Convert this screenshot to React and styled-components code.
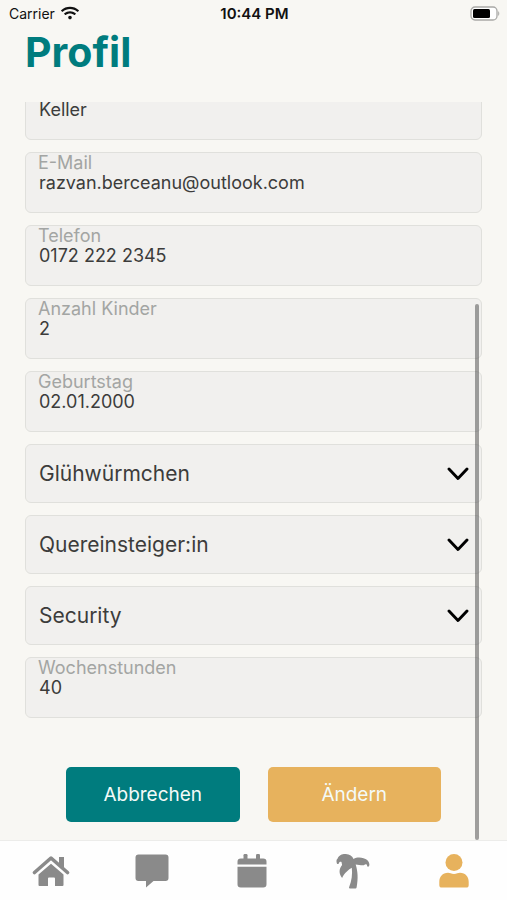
import React, { useLayoutEffect, useRef, useState } from 'react';
import styled, { createGlobalStyle } from 'styled-components';
import { FaUser, FaWifi } from 'react-icons/fa';

const colors = {
  background: '#f8f7f3',
  field: '#f1f0ee',
  border: '#e0e0dc',
  text: '#3c3c3b',
  label: '#a3a5a3',
  primary: '#007c7e',
  secondary: '#e7b25d',
  icon: '#8a8a8a',
};

const GlobalStyle = createGlobalStyle`
  * { box-sizing: border-box; }

  body {
    margin: 0;
    background: ${colors.background};
    color: ${colors.text};
    font-family: Inter, "Liberation Sans", sans-serif;
  }

  button, input, select { font-family: inherit; }
`;

const Screen = styled.div`
  display: flex;
  flex-direction: column;
  height: 100vh;
`;

const StatusBar = styled.div`
  display: grid;
  grid-template-columns: 1fr auto 1fr;
  align-items: center;
  height: 26px;
  padding: 0 7px 0 9px;
  color: #111;
  font-size: 14px;
`;

const Carrier = styled.span`
  display: flex;
  align-items: center;
  gap: 6px;
`;

const Time = styled.span`
  font-size: 15px;
  font-weight: 600;
`;

const BatterySlot = styled.span`
  display: flex;
  justify-content: flex-end;
`;

const Title = styled.h1`
  margin: 0;
  padding: 2px 25px 26px;
  color: ${colors.primary};
  font-size: 41px;
  font-weight: 700;
  line-height: 48px;
`;

const ScrollArea = styled.main`
  position: relative;
  flex: 1;
  min-height: 0;
`;

const Scroller = styled.div`
  height: 100%;
  overflow-y: auto;
  scrollbar-width: none;
`;

const Thumb = styled.div`
  position: absolute;
  right: 28px;
  width: 4px;
  border-radius: 2px;
  background: rgba(70, 70, 70, 0.5);
  pointer-events: none;
`;

const Form = styled.form`
  display: flex;
  flex-direction: column;
  gap: 12px;
  padding: 28px 25px 18px;
`;

const Avatar = styled.div`
  display: flex;
  align-items: center;
  justify-content: center;
  align-self: center;
  width: 160px;
  height: 160px;
  margin-bottom: 56px;
  border-radius: 50%;
  background: ${colors.field};
  color: ${colors.icon};
`;

const FieldBox = styled.div`
  display: flex;
  flex-direction: column;
  flex-shrink: 0;
  height: 61px;
  padding: 0 12px;
  border: 1px solid ${colors.border};
  border-radius: 6px;
  background: ${colors.field};
`;

const FieldLabel = styled.label`
  color: ${colors.label};
  font-size: 18px;
  line-height: 20px;
`;

const FieldInput = styled.input`
  width: 100%;
  height: 20px;
  padding: 0 1px;
  border: none;
  outline: none;
  background: transparent;
  color: ${colors.text};
  font-size: 18px;
  line-height: 20px;
`;

const SelectBox = styled.div`
  display: grid;
  align-items: center;
  flex-shrink: 0;
  height: 59px;
  border: 1px solid ${colors.border};
  border-radius: 6px;
  background: ${colors.field};

  > * { grid-area: 1 / 1; }

  > svg {
    justify-self: end;
    margin-right: 12px;
    pointer-events: none;
  }
`;

const Select = styled.select`
  appearance: none;
  width: 100%;
  height: 100%;
  padding: 0 40px 0 13px;
  border: none;
  outline: none;
  background: transparent;
  color: ${colors.text};
  font-size: 21px;
`;

const Actions = styled.div`
  display: flex;
  gap: 28px;
  padding: 37px 41px 0;
`;

const ActionButton = styled.button`
  flex: 1;
  height: 55px;
  border: none;
  border-radius: 5px;
  background: ${({ $secondary }) => ($secondary ? colors.secondary : colors.primary)};
  color: #f4faf8;
  font-size: 19px;
  cursor: pointer;
`;

const TabBar = styled.nav`
  display: flex;
  flex-shrink: 0;
  height: 60px;
  padding: 0 3px 0 1px;
  border-top: 1px solid #ececea;
  background: #fefefe;
`;

const Tab = styled.a`
  display: flex;
  flex: 1;
  align-items: center;
  justify-content: center;
  color: ${({ $active }) => ($active ? colors.secondary : colors.icon)};
`;

const Battery = () => (
  <svg width="30" height="15" viewBox="0 0 30 15" aria-hidden="true">
    <rect x="1" y="1" width="26" height="13" rx="4" fill="#fff" stroke="#a9a9a7" strokeWidth="1.3" />
    <rect x="3" y="3" width="17" height="9" rx="1.5" fill="#000" />
    <path d="M28.2 5.2c1.4.6 1.4 4 0 4.6z" fill="#a9a9a7" />
  </svg>
);

const Chevron = () => (
  <svg width="22" height="14" viewBox="0 0 22 14" fill="none" aria-hidden="true">
    <path d="M2 2l9 9.500 9-9.500" stroke="#000" strokeWidth="2.900" strokeLinecap="round" strokeLinejoin="round" />
  </svg>
);

const HouseIcon = () => (
  <svg width="38" height="32" viewBox="0 0 38 32" fill="currentColor" aria-hidden="true">
    <path d="M2.500 17.500L19 3l16.500 14.500" fill="none" stroke="currentColor" strokeWidth="3.600" strokeLinecap="round" strokeLinejoin="round" />
    <path d="M27 2h5v13l-5-4.500z" />
    <path d="M19 8.800L31.500 19.600V30a1 1 0 0 1-1 1H23v-7.500a1 1 0 0 0-1-1h-5a1 1 0 0 0-1 1V31H7.500a1 1 0 0 1-1-1V19.600z" />
  </svg>
);

const ChatIcon = () => (
  <svg width="34" height="34" viewBox="0 0 34 34" fill="currentColor" aria-hidden="true">
    <path d="M3.500.500h27a3 3 0 0 1 3 3v20.500a3 3 0 0 1-3 3H18.500l-7.500 6.500V27H3.500a3 3 0 0 1-3-3V3.500a3 3 0 0 1 3-3z" />
  </svg>
);

const CalendarIcon = () => (
  <svg width="30" height="34" viewBox="0 0 30 34" fill="currentColor" aria-hidden="true">
    <rect x="6.500" width="4" height="7" rx="1.200" />
    <rect x="19" width="4" height="7" rx="1.200" />
    <path d="M3.800 4.500h22.400A3.300 3.300 0 0 1 29.500 7.800V10.500H.500V7.800a3.300 3.300 0 0 1 3.300-3.300z" />
    <path d="M.500 12.700h29v17.500a3.300 3.300 0 0 1-3.300 3.300H3.800a3.300 3.300 0 0 1-3.300-3.300z" />
  </svg>
);

const PalmIcon = () => (
  <svg width="34" height="36" viewBox="0 0 34 36" fill="currentColor" aria-hidden="true">
    <path d="M.9 10.500C.3 8.600.2 6.500 1.500 5.700 3 1.800 7 .7 9.800 1c3.800.2 6.700 2 7.700 5 3-1.700 7-1.700 10-.700 3.800 1 6 3.700 5.900 6.500-.1 1.500-1.100 2.400-1.900 1.700-.600-.600-.300-1.700-1.200-2.200-1.200-.700-1.800 1-3.300 1-2 .1-5-.900-7.300-.900 2 6.500 2.700 13.500.9 23.100-.2.600-.5.900-1.100.9h-5.700c-.700 0-.900-.5-.7-1.100 2.700-6.600 3.400-13 2.700-19.500-2.900 1.500-7.600 5.600-9.700 10.100C2.500 20.500 3 15.500 6.100 11.900l-.6-2.800c-1-.7-2.200-.2-2.500.9-.2 1-1.600 1.500-2.100.5z" />
  </svg>
);

const PersonIcon = () => (
  <svg width="30" height="34" viewBox="0 0 30 34" fill="currentColor" aria-hidden="true">
    <circle cx="15" cy="8.500" r="8.500" />
    <path d="M9 18.800c2 0 3.200 1.200 6 1.200s4-1.200 6-1.200c5.500 0 8.700 4 8.700 9v3.200a2.600 2.600 0 0 1-2.600 2.600H2.900A2.600 2.600 0 0 1 .3 31v-3.200c0-5 3.200-9 8.700-9z" />
  </svg>
);

function TextField({ id, label, value, type = 'text' }) {
  return (
    <FieldBox>
      <FieldLabel htmlFor={id}>{label}</FieldLabel>
      <FieldInput id={id} type={type} defaultValue={value} />
    </FieldBox>
  );
}

function SelectField({ label, value }) {
  return (
    <SelectBox>
      <Select aria-label={label} defaultValue={value}>
        <option value={value}>{value}</option>
      </Select>
      <Chevron />
    </SelectBox>
  );
}

export default function App() {
  const scroller = useRef(null);
  const [thumb, setThumb] = useState({ top: 0, height: 0 });

  const updateThumb = () => {
    const { scrollTop, scrollHeight, clientHeight } = scroller.current;
    setThumb({
      top: (scrollTop / scrollHeight) * clientHeight,
      height: (clientHeight / scrollHeight) * clientHeight,
    });
  };

  useLayoutEffect(() => {
    scroller.current.scrollTop = scroller.current.scrollHeight;
    updateThumb();
    window.addEventListener('resize', updateThumb);
    return () => window.removeEventListener('resize', updateThumb);
  }, []);

  return (
    <Screen>
      <GlobalStyle />
      <StatusBar>
        <Carrier>
          Carrier
          <FaWifi size={18} />
        </Carrier>
        <Time>10:44 PM</Time>
        <BatterySlot>
          <Battery />
        </BatterySlot>
      </StatusBar>
      <Title>Profil</Title>
      <ScrollArea>
        <Scroller ref={scroller} onScroll={updateThumb}>
          <Form onSubmit={(e) => e.preventDefault()}>
            <Avatar>
              <FaUser size={72} />
            </Avatar>
            <TextField id="lastName" label="Nachname" value="Keller" />
            <TextField id="email" label="E-Mail" type="email" value="razvan.berceanu@outlook.com" />
            <TextField id="phone" label="Telefon" type="tel" value="0172 222 2345" />
            <TextField id="children" label="Anzahl Kinder" value="2" />
            <TextField id="birthday" label="Geburtstag" value="02.01.2000" />
            <SelectField label="Gruppe" value="Glühwürmchen" />
            <SelectField label="Position" value="Quereinsteiger:in" />
            <SelectField label="Bereich" value="Security" />
            <TextField id="weeklyHours" label="Wochenstunden" value="40" />
            <Actions>
              <ActionButton type="button">Abbrechen</ActionButton>
              <ActionButton type="submit" $secondary>Ändern</ActionButton>
            </Actions>
          </Form>
        </Scroller>
        <Thumb style={thumb} />
      </ScrollArea>
      <TabBar>
        <Tab href="#home" aria-label="Home"><HouseIcon /></Tab>
        <Tab href="#chat" aria-label="Chat"><ChatIcon /></Tab>
        <Tab href="#calendar" aria-label="Kalender"><CalendarIcon /></Tab>
        <Tab href="#vacation" aria-label="Urlaub"><PalmIcon /></Tab>
        <Tab href="#profile" aria-label="Profil" $active><PersonIcon /></Tab>
      </TabBar>
    </Screen>
  );
}
